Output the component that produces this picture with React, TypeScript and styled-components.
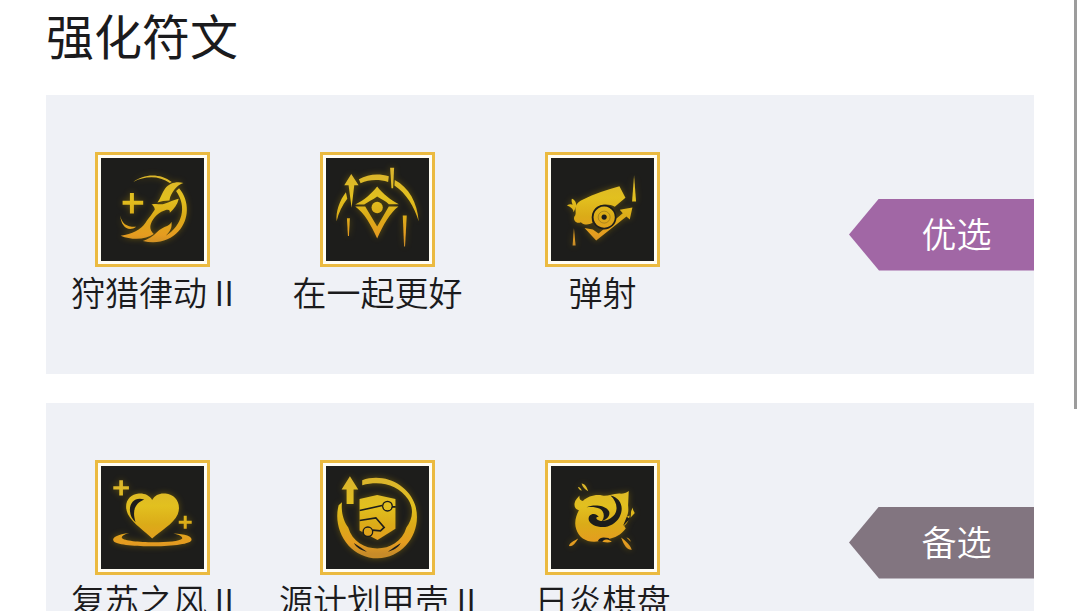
import React from 'react';
import styled, { createGlobalStyle } from 'styled-components';

const GlobalStyle = createGlobalStyle`
  html {
    scrollbar-width: none;
  }
  body {
    margin: 0;
    background: #fff;
    color: #1b1b1d;
    font-family: 'Noto Sans CJK SC', 'Noto Sans', sans-serif;
  }
`;

const Page = styled.main`
  padding: 0 46px 29px;
`;

const Title = styled.h1`
  margin: 0 0 27px;
  font-size: 48px;
  line-height: 68px;
  font-weight: 400;
`;

const PanelList = styled.div`
  display: flex;
  flex-direction: column;
  gap: 29px;
`;

const Panel = styled.section`
  display: flex;
  align-items: center;
  justify-content: space-between;
  background: #eff1f6;
`;

const RuneList = styled.ul`
  display: flex;
  gap: 12px;
  margin: 0;
  padding: 57px 0;
  list-style: none;
`;

const Rune = styled.li`
  display: flex;
  flex-direction: column;
  align-items: center;
  width: 213px;
`;

const Tile = styled.div`
  box-sizing: border-box;
  width: 115px;
  height: 115px;
  border: 3px solid #ebba40;
  padding: 3px;
  background: #fffdf4;
`;

const Art = styled.svg`
  display: block;
  width: 100%;
  height: 100%;
  background: #1d1d1b;
`;

const RuneName = styled.span`
  font-size: 34px;
  font-weight: 350;
  line-height: 50px;
  white-space: nowrap;
`;

const Tag = styled.span<{ $color: string }>`
  box-sizing: border-box;
  flex: none;
  width: 185px;
  padding: 0 0 4px 30px;
  background: ${(p) => p.$color};
  clip-path: polygon(30px 0, 100% 0, 100% 100%, 30px 100%, 0 50%);
  color: #fff;
  font-size: 35px;
  font-weight: 350;
  line-height: 68px;
  text-align: center;
`;

const ScrollThumb = styled.div`
  position: fixed;
  top: 0;
  right: 3px;
  width: 3px;
  height: 67vh;
  background: #9c9c9c;
`;

const BG = '#1d1d1b';

function HuntPulse({ fill }: { fill: string }) {
  return (
    <g fill={fill}>
      <path d="M120 136h12v24h28v12h-28v26h-12v-26H98v-12h22z" />
      <path d="M130 103C160 80 208 74 246 103L240 106C208 84 166 84 130 103Z" />
      <path d="M268 122C301 161 298 217 267 251C242 280 202 291 159 281C174 276 190 267 202 254C210 246 222 240 232 236C240 232 243 228 245 223C248 242 240 253 228 265C279 232 292 177 259 130Z" />
      <path d="M281 106C264 112 256 122 248 135C242 145 240 152 239 159C226 159 214 162 203 165C213 151 217 136 226 123C239 106 260 101 281 106Z" />
      <path d="M267 154C263 172 253 185 240 196C241 188 238 185 230 187C209 193 190 209 183 230C179 242 183 252 192 260C169 276 129 280 92 265C127 261 153 247 167 226C179 208 191 194 195 186C194 179 190 174 185 171C204 167 211 173 224 169C239 164 252 158 267 154Z" />
      <path d="M91 204C95 229 111 239 139 238C116 255 93 238 91 204Z" />
    </g>
  );
}

function BetterTogether({ fill }: { fill: string }) {
  return (
    <g fill={fill}>
      <path d="M109 79L131 113H118L110 181L101 113H88Z" />
      <path d="M132 95C160 78 194 77 222 86L220 103C190 94 162 96 137 107Z" />
      <path d="M240 97C282 119 308 165 312 221C298 177 275 138 239 114Z" />
      <path d="M93 134L97 154C82 173 71 196 65 221C62 193 74 158 93 134Z" />
      <path d="M226 60H238L235 122H230Z" />
      <path d="M96 212H105L102 266H99Z" />
      <path d="M264 204H276L271 297H268Z" />
      <path d="M187 117C204 139 228 158 252 170H222C213 161 200 156 187 147C174 156 161 163 148 171H121C147 159 170 139 187 117Z" />
      <path d="M121 177H151L187 237L222 177H251C226 195 205 233 187 273C169 233 148 196 121 177Z" />
      <circle cx="187" cy="180" r="17" />
    </g>
  );
}

function Ricochet({ fill }: { fill: string }) {
  return (
    <g fill={fill}>
      <path d="M239 116L257 151L225 178C209 168 184 168 168 181C156 193 153 210 158 226C145 234 130 232 123 224C112 231 99 220 103 208C109 202 107 194 107 188C105 172 115 163 128 157C164 138 202 127 239 116Z" />
      <path d="M101 194C100 182 91 179 81 173C91 169 95 170 98 172C95 164 94 158 96 154C102 155 110 164 109 176Z" />
      <path d="M278 180L270 216L260 207L169 279L134 242L159 246L176 258L249 197L240 187Z" />
      <circle cx="193" cy="209" r="37" fill={BG} />
      <path fillRule="evenodd" d="M193 177a32 32 0 1 0 .1 0ZM193 201a8 8 0 1 1-.1 0Z" />
      <circle cx="193" cy="209" r="18" fill="none" stroke={BG} strokeOpacity="0.25" strokeWidth="3" />
      <path d="M283 83L289 162H277Z" />
      <path d="M102 242L107 294H98Z" />
    </g>
  );
}

function HealingWind({ fill }: { fill: string }) {
  return (
    <g fill={fill}>
      <path d="M88 74h11v18h18v10H99v18H88v-18H70V92h18z" />
      <path d="M282 181h9v15h15v9h-15v15h-9v-15h-15v-9h15z" />
      <path d="M118 233C84 237 64 247 71 257C83 279 291 278 305 255C310 243 285 235 251 234C267 237 281 243 277 250C264 265 107 264 96 248C94 242 103 237 118 233Z" />
      <path d="M187 249C165 226 131 207 114 176C99 144 117 116 147 114C164 113 178 119 187 133C196 118 210 112 227 114C257 116 276 145 264 176C250 207 211 226 187 249Z" />
      <path d="M163 132C139 123 119 138 120 165C121 181 127 191 137 200C126 165 135 144 163 132Z" fill={BG} />
    </g>
  );
}

function ProjectShell({ fill }: { fill: string }) {
  return (
    <g fill={fill}>
      <path d="M105 62L130 102H116V145H95V102H80Z" />
      <path d="M142 74C207 50 281 87 301 148C325 224 271 307 188 309C105 309 51 225 71 149L81 140C78 171 86 198 100 216C124 300 250 300 275 216C292 194 300 162 280 131C250 87 197 74 142 89Z" />
      <path d="M117 263C130 271 143 281 156 289C141 286 124 277 117 263ZM258 263C245 271 232 281 219 289C234 286 251 277 258 263Z" fill={BG} />
      <path d="M134 130L187 118L242 130V220L188 254L134 225Z" />
      <g fill="none" stroke={BG} strokeWidth="5">
        <path d="M134 165L202 150M231 154H243M134 195L183 187L208 216L197 226L173 224" />
        <circle cx="218" cy="152" r="14" />
        <circle cx="159" cy="229" r="14" />
      </g>
      <circle cx="218" cy="152" r="12" />
      <circle cx="159" cy="229" r="12" />
    </g>
  );
}

function SunfireBoard({ fill }: { fill: string }) {
  return (
    <g fill={fill}>
      <path d="M119 120C117 129 121 135 129 136C143 123 168 115 187 120C203 123 216 115 238 114C250 115 258 113 267 106L265 149C266 161 267 170 261 184L270 180C266 197 261 206 253 211L258 219C243 239 225 247 205 251L216 259C203 263 192 260 179 257C145 264 118 249 109 221C102 202 108 180 117 164C109 162 102 156 104 143C106 133 113 127 119 120Z" />
      <path d="M140 155C162 146 198 149 208 168C212 181 201 192 186 197C195 184 194 168 180 160C168 154 155 153 140 155Z" fill={BG} />
      <path d="M212 120C246 128 253 160 239 185C226 207 200 220 174 213C150 208 141 192 149 181C158 171 173 176 177 185C171 183 167 187 171 191C183 202 211 195 225 176C236 158 229 136 212 120Z" fill={BG} />
      <path d="M261 184L250 211C257 205 263 199 270 190Z" fill={BG} />
      <path d="M174 257C181 243 193 246 206 248L213 256C199 250 192 251 187 260Z" fill={BG} />
      <path d="M125 84C135 85 140 93 145 107C135 103 128 94 125 84ZM114 94C120 94 124 100 126 105C119 104 116 99 114 94Z" />
      <path d="M280 156C277 166 287 169 284 174L272 187C276 175 270 169 280 156Z" />
      <path d="M115 249C105 265 98 274 87 272C89 262 99 258 115 249ZM244 246C257 256 271 267 276 283C262 284 254 272 244 246ZM260 246C267 247 272 252 273 259Z" />
    </g>
  );
}

type Drawing = (props: { fill: string }) => React.ReactElement;

function RuneItem({ id, name, drawing: Draw }: { id: string; name: string; drawing: Drawing }) {
  return (
    <Rune>
      <Tile>
        <Art viewBox="33 31 310 310" aria-hidden="true">
          <defs>
            <linearGradient id={`${id}-gold`} gradientUnits="userSpaceOnUse" x1="0" y1="75" x2="0" y2="295">
              <stop offset="0" stopColor="#dbb52c" />
              <stop offset="0.35" stopColor="#e2c01f" />
              <stop offset="0.6" stopColor="#dbab18" />
              <stop offset="0.85" stopColor="#e59c20" />
              <stop offset="1" stopColor="#c78b28" />
            </linearGradient>
            <filter id={`${id}-glow`} x="-20%" y="-20%" width="140%" height="140%">
              <feGaussianBlur stdDeviation="10" />
            </filter>
          </defs>
          <g filter={`url(#${id}-glow)`} opacity="0.5">
            <Draw fill="#a88600" />
          </g>
          <Draw fill={`url(#${id}-gold)`} />
        </Art>
      </Tile>
      <RuneName>{name}</RuneName>
    </Rune>
  );
}

const groups = [
  {
    tag: '优选',
    color: '#a167a5',
    runes: [
      { id: 'hunt', name: '狩猎律动 II', drawing: HuntPulse },
      { id: 'together', name: '在一起更好', drawing: BetterTogether },
      { id: 'ricochet', name: '弹射', drawing: Ricochet },
    ],
  },
  {
    tag: '备选',
    color: '#827580',
    runes: [
      { id: 'wind', name: '复苏之风 II', drawing: HealingWind },
      { id: 'shell', name: '源计划甲壳 II', drawing: ProjectShell },
      { id: 'sunfire', name: '日炎棋盘', drawing: SunfireBoard },
    ],
  },
];

export default function App() {
  return (
    <>
      <GlobalStyle />
      <Page>
        <Title>强化符文</Title>
        <PanelList>
          {groups.map((group) => (
            <Panel key={group.tag}>
              <RuneList>
                {group.runes.map((rune) => (
                  <RuneItem key={rune.id} {...rune} />
                ))}
              </RuneList>
              <Tag $color={group.color}>{group.tag}</Tag>
            </Panel>
          ))}
        </PanelList>
      </Page>
      <ScrollThumb />
    </>
  );
}
